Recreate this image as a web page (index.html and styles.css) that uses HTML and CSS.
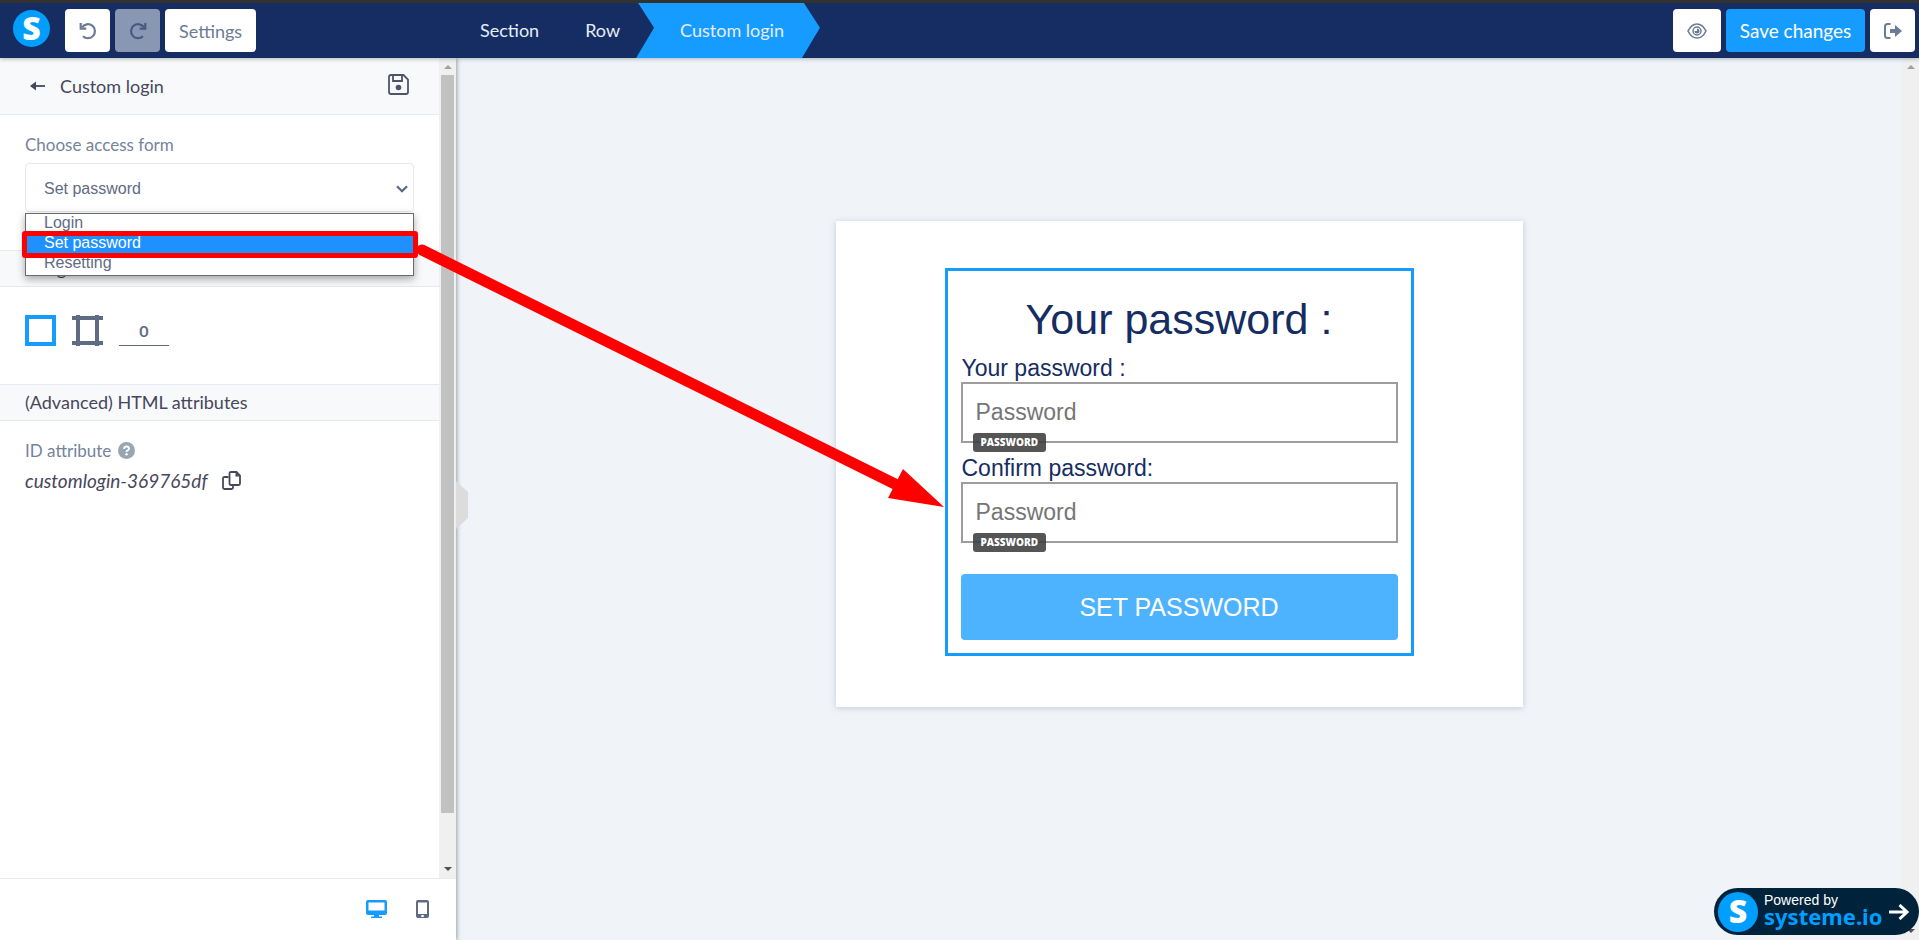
FILE: index.html
```html
<!doctype html>
<html lang="en">
<head>
<meta charset="utf-8">
<title>Custom login</title>
<link rel="stylesheet" href="styles.css">
</head>

<body>
<header class="topbar">
	<div class="tools">
		<a class="logo" href="#">S</a>
		<button class="btn btn-icon" aria-label="Undo">
			<svg width="18" height="18" viewBox="0 0 18 18"><path d="M3.2 5.2A7 7 0 1 1 4 14.2M1.7 1v5.6h5.6" fill="none" stroke="#6b7b96" stroke-width="2.2"/></svg>
		</button>
		<button class="btn btn-icon btn-off" aria-label="Redo">
			<svg width="18" height="18" viewBox="0 0 18 18"><path d="M14.8 5.2A7 7 0 1 0 14 14.2M16.3 1v5.6h-5.6" fill="none" stroke="#475a85" stroke-width="2.2"/></svg>
		</button>
		<button class="btn">Settings</button>
	</div>
	<nav class="crumbs">
		<a href="#">Section</a>
		<a href="#">Row</a>
		<a href="#" class="current">Custom login</a>
	</nav>
	<div class="actions">
		<button class="btn btn-eye" aria-label="Preview">
			<svg width="20" height="16" viewBox="0 0 20 16"><path d="M1 8c2-4 5.200-7 9-7s7 3 9 7c-2 4-5.200 7-9 7s-7-3-9-7z" fill="none" stroke="#6b7b96" stroke-width="1.600"/><circle cx="10" cy="8" r="4" fill="none" stroke="#6b7b96" stroke-width="1.500"/><path d="M10 5.500a2.500 2.500 0 1 1-2.500 2.500h2.500z" fill="#6b7b96"/></svg>
		</button>
		<button class="btn btn-save">Save changes</button>
		<button class="btn btn-icon" aria-label="Exit">
			<svg width="18" height="16" viewBox="0 0 18 16"><path d="M6.500 1H3.500Q1 1 1 3.500v9Q1 15 3.500 15h3" fill="none" stroke="#6b7b96" stroke-width="2"/><path d="M6 6h5V2l7 6-7 6v-4H6z" fill="#6b7b96"/></svg>
		</button>
	</div>
</header>

<div class="main">
	<aside class="sidebar">
		<div class="side-scroll">
			<div class="side-content">
				<div class="side-head">
					<button class="plain" aria-label="Back">
						<svg width="15" height="10" viewBox="0 0 15 10"><path d="M0 5l6-4.500v9z" fill="#47475c"/><path d="M4 5h11" stroke="#47475c" stroke-width="1.800"/></svg>
					</button>
					<h1>Custom login</h1>
					<button class="plain save-icon" aria-label="Save block">
						<svg width="21" height="21" viewBox="0 0 21 21"><path d="M3 1h12.500L20 5.500V18q0 2-2 2H3q-2 0-2-2V3q0-2 2-2z" fill="none" stroke="#50536b" stroke-width="1.800"/><path d="M5 1.500v5.500h9V1.500" fill="none" stroke="#50536b" stroke-width="1.800"/><circle cx="10.500" cy="13.500" r="2.800" fill="#50536b"/></svg>
					</button>
				</div>

				<div class="group group-form">
					<label for="access">Choose access form</label>
					<div class="select-wrap">
						<select id="access">
							<option>Login</option>
							<option selected>Set password</option>
							<option>Resetting</option>
						</select>
						<svg class="chevron" width="12" height="8" viewBox="0 0 12 8"><path d="M1 1.200l5 5 5-5" fill="none" stroke="#5b6880" stroke-width="2.200"/></svg>
						<ul class="options" role="listbox" aria-label="Choose access form">
							<li role="option">Login</li>
							<li role="option" aria-selected="true" class="on">Set password</li>
							<li role="option">Resetting</li>
						</ul>
					</div>
				</div>

				<h2 class="bar">Margin</h2>
				<div class="group margins">
					<button class="plain" aria-label="All sides">
						<svg width="31" height="31" viewBox="0 0 31 31"><path d="M2 2h27v27H2z" fill="none" stroke="#169cff" stroke-width="4"/></svg>
					</button>
					<button class="plain" aria-label="Each side">
						<svg width="31" height="31" viewBox="0 0 31 31"><path d="M0 3h31M0 28h31M6 0v31M25 0v31" fill="none" stroke="#5f6b82" stroke-width="4"/></svg>
					</button>
					<input class="amount" type="text" value="0" aria-label="Margin size">
				</div>

				<h2 class="bar">(Advanced) HTML attributes</h2>
				<div class="group attrs">
					<div class="attr-label">ID attribute
						<svg width="17" height="17" viewBox="0 0 17 17"><circle cx="8.500" cy="8.500" r="8.500" fill="#98a6b1"/><path d="M6 6.800q.2-2.300 2.500-2.300t2.500 2q0 1.200-1.300 1.800-1.200.5-1.200 1.700" fill="none" stroke="#fff" stroke-width="1.900"/><circle cx="8.500" cy="12.300" r="1.200" fill="#fff"/></svg>
					</div>
					<div class="attr-id"><em>customlogin-369765df</em>
						<button class="plain" aria-label="Copy">
							<svg width="19" height="19" viewBox="0 0 19 19"><path d="M6.500 6H2.500Q1 6 1 7.500v9Q1 18 2.500 18h7q1.500 0 1.500-1.500V14" fill="none" stroke="#47475c" stroke-width="1.800"/><path d="M9 1h5.500L18 4.500V12.500q0 1.500-1.500 1.500H9q-1.500 0-1.500-1.500v-10Q7.500 1 9 1z" fill="none" stroke="#47475c" stroke-width="1.800"/><path d="M13.500 1v4.500H18z" fill="#47475c"/></svg>
						</button>
					</div>
				</div>
			</div>
			<div class="scrollbar"><i class="up"></i><span class="thumb"></span><i class="down"></i></div>
		</div>
		<div class="devices">
			<button class="plain" aria-label="Desktop">
				<svg width="21" height="18" viewBox="0 0 21 18"><path d="M2 0h17q2 0 2 2v11q0 2-2 2h-6v1.500h3V18H5v-1.500h3V15H2q-2 0-2-2V2q0-2 2-2zm.5 2.500v8h16v-8z" fill="#169cff" fill-rule="evenodd"/></svg>
			</button>
			<button class="plain" aria-label="Mobile">
				<svg width="13" height="18" viewBox="0 0 13 18"><path d="M2 0h9q2 0 2 2v14q0 2-2 2H2q-2 0-2-2V2q0-2 2-2zm0 2.500v11.500h9V2.500zm3.300 12.500v2h2.400v-2z" fill="#5f6b82" fill-rule="evenodd"/></svg>
			</button>
		</div>
		<div class="handle"></div>
	</aside>

	<main class="canvas">
		<section class="card">
			<form class="login">
				<h3>Your password :</h3>
				<label for="pass">Your password :</label>
				<div class="field">
					<input id="pass" type="password" placeholder="Password">
					<span class="tag">PASSWORD</span>
				</div>
				<label for="confirm">Confirm password:</label>
				<div class="field">
					<input id="confirm" type="password" placeholder="Password">
					<span class="tag">PASSWORD</span>
				</div>
				<button class="submit" type="button">SET PASSWORD</button>
			</form>
		</section>
	</main>
	<div class="scrollbar"><i class="up"></i><i class="down"></i></div>
</div>

<svg class="pointer" width="530" height="270" viewBox="0 0 530 270"><path d="M7 10L482 245" stroke="#f00" stroke-width="11" stroke-linecap="round"/><path d="M529 267l-41-38-15 29z" fill="#f00"/></svg>

<a class="powered" href="#">
	<span class="mark">S</span>
	<span class="words"><small>Powered by</small><b>systeme.io</b></span>
	<svg width="20" height="16" viewBox="0 0 20 16"><path d="M0 8h17M10.500 1l7.500 7-7.500 7" fill="none" stroke="#fff" stroke-width="3"/></svg>
</a>
</body>
</html>
```
FILE: styles.css
```css
* {margin:0; padding:0; box-sizing:border-box; list-style:none;}

body {height:100vh; display:flex; flex-direction:column; overflow:hidden; position:relative; font-family:Lato, "Open Sans", sans-serif; font-size:18px; color:#47475c; background:#f0f4f9;}
a {color:inherit; text-decoration:none;}
button, input, select {font:inherit; color:inherit; border:0; background:none;}
svg {display:block; flex:none;}

/* top bar */
.topbar {display:flex; align-items:stretch; height:58px; flex:none; position:relative; z-index:2; background:#152d62; border-top:3px solid #33322f; box-shadow:0 1px 4px rgba(60,80,90,.4);}
.tools {display:flex; gap:5px; width:462px; padding:6px 0 6px 13px;}
.logo {width:37px; height:37px; margin:1px 10px 0 0; border-radius:50%; background:#009fff; color:#fff; font:800 32px/36px "Open Sans", sans-serif; text-align:center;}
.btn {height:43px; padding:0 14px; border-radius:4px; background:#fff; color:#6b7b96; display:flex; align-items:center; justify-content:center;}
.btn-icon {width:45px; padding:0;}
.btn-off {background:#8a97b2;}
.btn-eye {width:48px; padding:0;}
.btn-save {width:139px; padding:0; background:#169cff; color:#fff; font-size:19px;}

.crumbs {display:flex; flex:1;}
.crumbs a {display:flex; align-items:center; padding:0 28px 2px 18px; color:#e6edf7;}
.crumbs .current {margin-left:-12px; padding:0 36px 2px 44px; background:#169cff; clip-path:polygon(2px 0, calc(100% - 16px) 0, 100% 45%, calc(100% - 18px) 100%, 0 100%, 18px 45%);}
.actions {display:flex; gap:5px; padding:6px 4px 6px 0;}

.main {display:flex; flex:1; min-height:0;}

/* sidebar */
.sidebar {width:456px; flex:none; display:flex; flex-direction:column; position:relative; z-index:1; background:#fff; box-shadow:1px 0 4px rgba(60,70,90,.5);}
.side-scroll {flex:1; display:flex; min-height:0;}
.side-content {flex:1;}
.side-head {display:flex; align-items:center; height:57px; padding:0 30px; background:#f7f9fb; border-bottom:1px solid #e9edf2;}
.side-head h1 {flex:1; margin-left:15px; font-size:18px; font-weight:400;}
.plain {display:block; cursor:pointer;}
.save-icon {padding-bottom:4px;}
.group {padding:0 25px;}
.group-form {height:135px; padding-top:18px; font-size:16px;}
.group-form label {display:block; height:30px; font-size:17px; line-height:24px; color:#74849c;}
.select-wrap {position:relative; font-family:"Liberation Sans", sans-serif; color:#5f6b82;}
.select-wrap select {display:block; width:100%; height:49px; padding:2px 18px 0; border:1px solid #e8e8ec; border-radius:4px; appearance:none; background:#fff;}
.chevron {position:absolute; right:6px; top:22px;}
.options {position:absolute; left:0; right:0; top:50px; z-index:1; padding-bottom:1px; border:1px solid #6b6b6b; background:#fff; box-shadow:0 3px 8px rgba(0,0,0,.35);}
.options li {height:20px; line-height:18px; padding-left:18px;}
.options .on {position:relative; color:#fff; background:#1e90ff;}
.options .on::after {content:""; position:absolute; left:-4px; right:-5px; top:-3px; bottom:-4px; border:5px solid #f00; border-radius:3px;}

.bar {height:37px; padding:0 25px; border:1px solid #e6e9f0; border-width:1px 0; background:#f7f9fb; font-size:18px; font-weight:400; line-height:34px;}
.margins {display:flex; align-items:flex-start; gap:16px; height:97px; padding-top:28px;}
.amount {width:50px; height:31px; border-bottom:1px solid #5f6b82; color:#5f6b82; text-align:center; font-size:16px; font-weight:700;}
.attrs {padding-top:18px;}
.attr-label {display:flex; align-items:center; gap:7px; height:22px; font-size:17px; color:#74849c;}
.attr-id {display:flex; align-items:center; gap:14px; height:38px; font-size:19px;}

.devices {display:flex; justify-content:flex-end; align-items:flex-start; gap:29px; height:62px; padding:21px 27px 0 0; border-top:1px solid #e9e9e9;}
.handle {position:absolute; left:100%; top:423px; width:12px; height:48px; background:#dcdcdc; clip-path:polygon(0 0, 100% 11px, 100% 37px, 0 100%);}

.scrollbar {display:flex; flex-direction:column; align-items:center; width:17px; flex:none; background:#f0f0f0;}
.scrollbar i {border:4px solid transparent;}
.scrollbar .up {margin-top:3px; border-bottom-color:#a0a0a0;}
.scrollbar .down {margin:auto 0 3px; border-top-color:#505050;}
.thumb {width:13px; height:90%; margin-top:6px; background:#c1c1c1;}

/* canvas */
.canvas {flex:1; padding:163px 20px 0; font-family:"Liberation Sans", sans-serif; color:#152d62;}
.card {max-width:687px; margin:0 auto; padding:47px 109px 51px; background:#fff; box-shadow:0 1px 6px rgba(60,80,100,.25);}
.login {padding:24px 13px 13px; border:3px solid #169cff;}
.login h3 {height:56px; line-height:48px; font-size:43px; font-weight:400; text-align:center;}
.login label {display:block; height:31px; line-height:34px; padding-left:1px; font-size:23px;}
.field {position:relative; margin-bottom:8px;}
.field input {display:block; width:100%; height:61px; padding:0 13px; border:2px solid #9d9d9d; font-size:23px;}
.field input::placeholder {color:#757575;}
.tag {position:absolute; left:12px; bottom:-9px; height:19px; padding:0 8px; border-radius:3px; background:rgba(60,60,60,.87); color:#fff; font:800 10px/19px "Open Sans", sans-serif;}
.submit {display:block; width:100%; height:66px; margin-top:31px; border-radius:4px; background:#4db3ff; color:#fff; font-size:25px;}

/* arrow from the chosen option to the form */
.pointer {position:absolute; left:415px; top:240px; z-index:3;}

.powered {position:absolute; right:0; bottom:5px; z-index:3; display:flex; align-items:center; gap:6px; width:205px; height:47px; padding:0 10px 0 4px; border-radius:24px; background:#00233c; color:#fff;}
.mark {width:40px; height:40px; border-radius:50%; background:#009fff; font:800 32px/38px "Open Sans", sans-serif; text-align:center;}
.words {flex:1; display:flex; flex-direction:column; padding-bottom:5px;}
.words small {font:14px/14px "Liberation Sans", sans-serif;}
.words b {color:#009fff; font:700 22px/18px "Noto Sans", sans-serif;}
```
